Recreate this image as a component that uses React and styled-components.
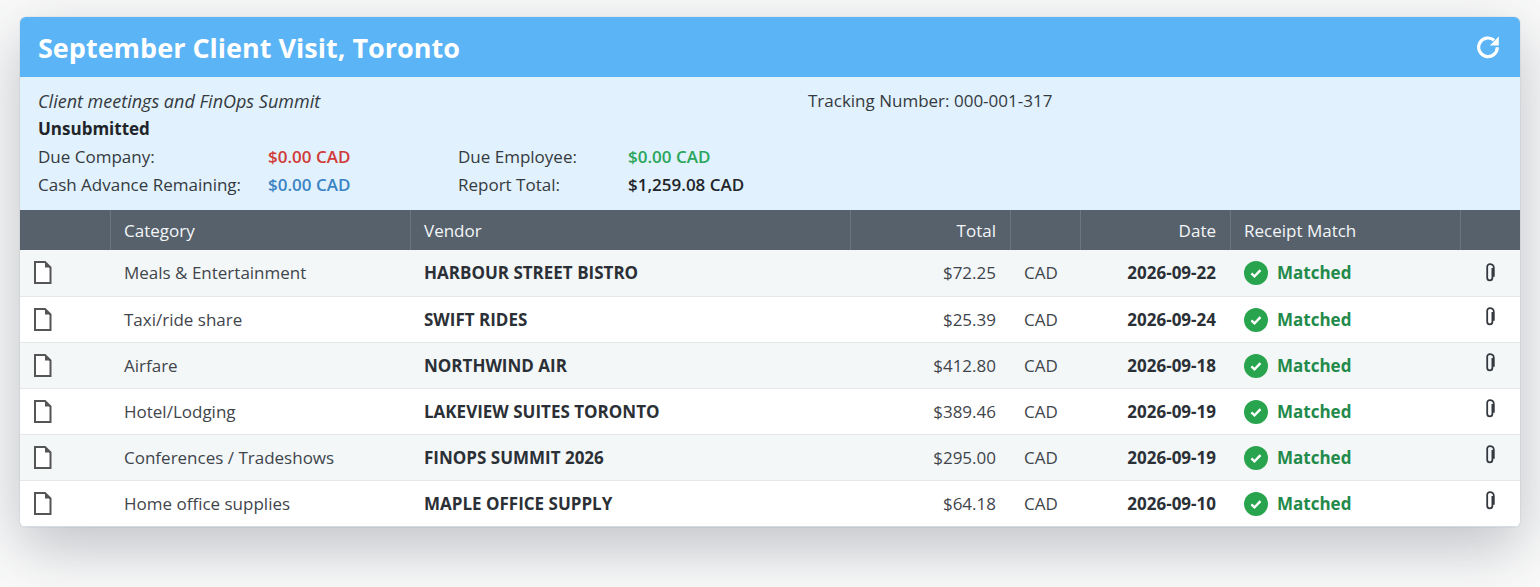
import React from "react";
import styled, { createGlobalStyle } from "styled-components";

const rows = [
  { category: "Meals & Entertainment", vendor: "HARBOUR STREET BISTRO", total: "$72.25", date: "2026-09-22" },
  { category: "Taxi/ride share", vendor: "SWIFT RIDES", total: "$25.39", date: "2026-09-24" },
  { category: "Airfare", vendor: "NORTHWIND AIR", total: "$412.80", date: "2026-09-18" },
  { category: "Hotel/Lodging", vendor: "LAKEVIEW SUITES TORONTO", total: "$389.46", date: "2026-09-19" },
  { category: "Conferences / Tradeshows", vendor: "FINOPS SUMMIT 2026", total: "$295.00", date: "2026-09-19" },
  { category: "Home office supplies", vendor: "MAPLE OFFICE SUPPLY", total: "$64.18", date: "2026-09-10" },
];

const RefreshIcon = () => (
  <svg width="24" height="24" viewBox="0 0 24 24" fill="none">
    <path d="M21.3 12.3a9.3 9.3 0 1 1-3.2-7" stroke="#fff" strokeWidth="3.2" />
    <path d="M22.8 1.5v9h-9z" fill="#fff" />
  </svg>
);

const FileIcon = () => (
  <svg width="18" height="23" viewBox="0 0 18 23" fill="none">
    <path d="M1 1h10l5.5 5.5V22H1z" stroke="#555" strokeWidth="2" fill="#fff" />
    <path d="M11 1v5.5h5.5z" fill="#555" />
  </svg>
);

const CheckBadge = () => (
  <svg width="24" height="24" viewBox="0 0 24 24">
    <circle cx="12" cy="12" r="12" fill="#28a44e" />
    <path d="M7.4 12.4l3.1 3 6-6.2" stroke="#fff" strokeWidth="2.4" fill="none" />
  </svg>
);

const ClipIcon = () => (
  <svg width="10" height="19" viewBox="0 0 10 19" fill="none">
    <path
      d="M7.4 5v9.8a2.6 2.6 0 0 1-5.2 0V3.8A2.7 2.7 0 0 1 4.9 1.1c2 0 3.9 1.3 3.9 3.6v9"
      stroke="#343a40"
      strokeWidth="1.8"
    />
  </svg>
);

const App = () => (
  <>
    <GlobalStyle />
    <Page>
      <Card>
        <Header>
          <Title>September Client Visit, Toronto</Title>
          <RefreshIcon />
        </Header>
        <Info>
          <TopLine>
            <Purpose>Client meetings and FinOps Summit</Purpose>
            <span>Tracking Number: 000-001-317</span>
          </TopLine>
          <Status>Unsubmitted</Status>
          <Amounts>
            <span>Due Company:</span>
            <Amount $color="#d13a36">$0.00 CAD</Amount>
            <span>Due Employee:</span>
            <Amount $color="#28a659">$0.00 CAD</Amount>
            <span>Cash Advance Remaining:</span>
            <Amount $color="#3a83c4">$0.00 CAD</Amount>
            <span>Report Total:</span>
            <Amount $color="#212529">$1,259.08 CAD</Amount>
          </Amounts>
        </Info>
        <Table>
          <colgroup>
            <col width="90" />
            <col width="300" />
            <col width="440" />
            <col width="160" />
            <col width="70" />
            <col width="150" />
            <col width="230" />
            <col width="60" />
          </colgroup>
          <thead>
            <tr>
              <Th />
              <Th>Category</Th>
              <Th>Vendor</Th>
              <Th $right>Total</Th>
              <Th />
              <Th $right>Date</Th>
              <Th>Receipt Match</Th>
              <Th />
            </tr>
          </thead>
          <tbody>
            {rows.map((row) => (
              <Row key={row.vendor}>
                <IconCell>
                  <FileIcon />
                </IconCell>
                <Td>{row.category}</Td>
                <Td $bold>{row.vendor}</Td>
                <Td $right>{row.total}</Td>
                <Td>CAD</Td>
                <Td $right $bold>
                  {row.date}
                </Td>
                <Td>
                  <Match>
                    <CheckBadge />
                    Matched
                  </Match>
                </Td>
                <ClipCell>
                  <ClipIcon />
                </ClipCell>
              </Row>
            ))}
          </tbody>
        </Table>
      </Card>
    </Page>
  </>
);

const GlobalStyle = createGlobalStyle`
  html, body {
    margin: 0;
    background: #fafafa;
    overflow: hidden;
  }
  body {
    font-family: "Open Sans", "Liberation Sans", sans-serif;
    font-size: 17px;
    color: #212529;
  }
`;

const Page = styled.div`
  height: 587px;
  padding: 17px 20px 0;
  box-sizing: border-box;
  overflow: hidden;
`;

const Card = styled.div`
  width: 1500px;
  border-radius: 6px;
  overflow: hidden;
  background: #fff;
  box-shadow: 0 0 1px rgba(60, 80, 100, 0.5), 0 20px 60px rgba(50, 60, 75, 0.3);
`;

const Header = styled.div`
  height: 60px;
  box-sizing: border-box;
  padding: 0 20px 0 18px;
  display: flex;
  align-items: center;
  justify-content: space-between;
  background: #5ab4f6;
`;

const Title = styled.h1`
  margin: 0;
  font-size: 27px;
  font-weight: 700;
  color: #fff;
`;

const Info = styled.div`
  height: 133px;
  box-sizing: border-box;
  padding: 10px 18px 0;
  background: #e1f1fd;
  line-height: 28px;
  color: #343a40;
`;

const TopLine = styled.div`
  display: grid;
  grid-template-columns: 770px auto;
`;

const Purpose = styled.span`
  font-size: 18px;
  font-style: italic;
`;

const Status = styled.div`
  font-weight: 700;
  color: #212529;
`;

const Amounts = styled.div`
  display: grid;
  grid-template-columns: 230px 190px 170px auto;
`;

const Amount = styled.span`
  font-weight: 600;
  color: ${(p) => p.$color};
`;

const Table = styled.table`
  width: 1500px;
  table-layout: fixed;
  border-collapse: separate;
  border-spacing: 0;
`;

const Th = styled.th`
  height: 40px;
  box-sizing: border-box;
  padding: 0 14px 0 13px;
  background: #56616c;
  border-left: 1px solid #6b7580;
  color: #f4f6f8;
  font-weight: 400;
  text-align: ${(p) => (p.$right ? "right" : "left")};

  &:first-child {
    border-left: none;
  }
`;

const Row = styled.tr`
  background: #fff;

  &:nth-child(odd) {
    background: #f3f7f8;
  }
  &:first-child > td {
    height: 47px;
    padding-bottom: 1px;
  }
  & > td {
    border-bottom: 1px solid #e4e8ea;
  }
  &:last-child > td {
    border-bottom-color: #d5dee5;
  }
`;

const Td = styled.td`
  height: 46px;
  box-sizing: border-box;
  padding: 0 14px;
  color: ${(p) => (p.$bold ? "#2b3036" : "#3f454b")};
  font-weight: ${(p) => (p.$bold ? 700 : 400)};
  text-align: ${(p) => (p.$right ? "right" : "left")};
`;

const IconCell = styled(Td)`
  line-height: 0;
`;

const ClipCell = styled(Td)`
  padding: 0 0 6px;
  line-height: 0;
  text-align: center;
`;

const Match = styled.span`
  display: flex;
  align-items: center;
  gap: 9px;
  font-weight: 700;
  color: #228a4a;
`;

export default App;
